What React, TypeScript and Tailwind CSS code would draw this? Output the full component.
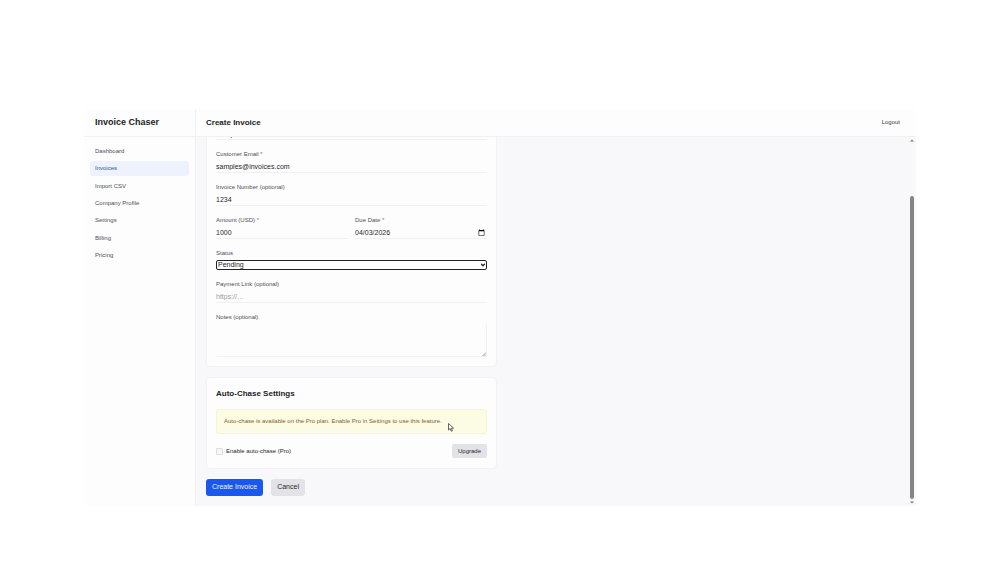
import React from 'react';
import { ChevronDown } from 'lucide-react';

const navItems = [
  'Dashboard',
  'Invoices',
  'Import CSV',
  'Company Profile',
  'Settings',
  'Billing',
  'Pricing',
];

const inputClass =
  'block w-full h-3 border-b border-[#f0f0f2] bg-transparent text-[7px] leading-[11px] text-[#26282c] placeholder:text-[#9a9ca1] outline-none';

const dateClass =
  '[&::-webkit-datetime-edit]:p-0 [&::-webkit-datetime-edit-fields-wrapper]:p-0 [&::-webkit-datetime-edit-month-field]:p-0 [&::-webkit-datetime-edit-day-field]:p-0 [&::-webkit-datetime-edit-year-field]:p-0';

interface FieldProps {
  id: string;
  label: string;
  required?: boolean;
  children: React.ReactNode;
}

const Field: React.FC<FieldProps> = ({ id, label, required, children }) => (
  <div>
    <label htmlFor={id} className="block mb-[2px] text-[6px] leading-[9px] text-[#4b4f57]">
      {label}
      {required && <span className="text-[#c25b5b]"> *</span>}
    </label>
    {children}
  </div>
);

const Sidebar: React.FC = () => (
  <aside className="w-28 shrink-0 flex flex-col border-r border-[#f1f1f4] bg-[#fdfdfd]">
    <div className="h-7 shrink-0 flex items-center px-[11px] border-b border-[#f1f1f4]">
      <span className="text-[9px] font-bold text-[#1b1e25]">Invoice Chaser</span>
    </div>
    <nav className="flex flex-col justify-between h-[119px] mt-[7px] px-[6px]">
      {navItems.map((item) => (
        <a
          key={item}
          href="#"
          className={
            item === 'Invoices'
              ? 'flex items-center h-[15px] px-[5px] rounded-[3px] text-[6px] bg-[#edf2fd] text-[#2c5796]'
              : 'flex items-center h-[15px] px-[5px] rounded-[3px] text-[6px] text-[#4b4f57]'
          }
        >
          {item}
        </a>
      ))}
    </nav>
  </aside>
);

const Scrollbar: React.FC = () => (
  <div className="w-2 shrink-0 flex flex-col items-center py-[2px]" aria-hidden="true">
    <svg viewBox="0 0 4 3" className="w-1 h-[3px]">
      <path d="M0 2.5 2 0.5 4 2.5Z" fill="#77787b" />
    </svg>
    <div className="basis-[54px] shrink-0" />
    <div className="w-1 flex-1 rounded-full bg-[#858587]" />
    <div className="h-[2px] shrink-0" />
    <svg viewBox="0 0 4 3" className="w-1 h-[3px]">
      <path d="M0 0.5 2 2.5 4 0.5Z" fill="#77787b" />
    </svg>
  </div>
);

const InvoiceDetails: React.FC = () => (
  <section className="flex flex-col gap-[10px] px-[9px] pt-[10px] pb-[9px] rounded-[4px] border border-[#f2f2f5] bg-[#fdfdfd]">
    <input
      type="text"
      aria-label="Customer Name"
      defaultValue="Sample"
      className={`${inputClass} pt-[2px]`}
    />
    <Field id="email" label="Customer Email" required>
      <input id="email" type="email" defaultValue="samples@invoices.com" className={inputClass} />
    </Field>
    <Field id="number" label="Invoice Number (optional)">
      <input id="number" type="text" defaultValue="1234" className={inputClass} />
    </Field>
    <div className="grid grid-cols-2 gap-[7px]">
      <Field id="amount" label="Amount (USD)" required>
        <input id="amount" type="text" defaultValue="1000" className={inputClass} />
      </Field>
      <Field id="due" label="Due Date" required>
        <input
          id="due"
          type="date"
          defaultValue="2026-04-03"
          className={`${inputClass} ${dateClass}`}
        />
      </Field>
    </div>
    <Field id="status" label="Status">
      <div className="relative">
        <select
          id="status"
          className="block w-full h-[10px] px-[1px] appearance-none rounded-[2px] border border-[#222] bg-[#fdfdfd] text-[7px] leading-[8px] text-[#26282c] outline-none"
        >
          <option>Pending</option>
          <option>Paid</option>
        </select>
        <ChevronDown
          className="absolute right-[1px] top-[2px] w-[6px] h-[6px] text-[#222] pointer-events-none"
          strokeWidth={5}
        />
      </div>
    </Field>
    <Field id="link" label="Payment Link (optional)">
      <input id="link" type="url" placeholder="https://…" className={inputClass} />
    </Field>
    <Field id="notes" label="Notes (optional)">
      <div className="relative">
        <textarea
          id="notes"
          className="block w-full h-[33px] resize-none rounded-[2px] border-b border-r border-[#f0f0f2] bg-transparent text-[7px] outline-none"
        />
        <svg viewBox="0 0 4 4" className="absolute right-[1px] bottom-[1px] w-1 h-1">
          <path d="M0.5 4 4 0.5M2.5 4 4 2.5" stroke="#77787b" strokeWidth="0.7" />
        </svg>
      </div>
    </Field>
  </section>
);

const AutoChase: React.FC = () => (
  <section className="px-[9px] py-[10px] rounded-[4px] border border-[#f2f2f5] bg-[#fdfdfd]">
    <h2 className="text-[8px] leading-[12px] font-bold text-[#1b1e25]">Auto-Chase Settings</h2>
    <div className="relative flex items-center h-[25px] mt-[9px] px-[7px] rounded-[3px] border border-[#f8f5cd] bg-[#fcfbe3] text-[6px] text-[#7d6430]">
      Auto-chase is available on the Pro plan. Enable Pro in Settings to use this feature.
      <svg viewBox="0 0 12 18" className="absolute left-[231px] top-[13px] w-[6px] h-[9px]">
        <path
          d="M1 1v13l3.2-3 2.3 5.5 2.3-1-2.3-5.2H11Z"
          fill="#fff"
          stroke="#333"
          strokeWidth="1.5"
        />
      </svg>
    </div>
    <div className="flex items-center justify-between mt-[10px]">
      <label htmlFor="auto" className="flex items-center gap-[3px] text-[6px] text-[#26282c]">
        <input
          id="auto"
          type="checkbox"
          disabled
          className="appearance-none w-[7px] h-[7px] rounded-[1px] border border-[#dcdcdf] bg-[#f7f7f8]"
        />
        Enable auto-chase (Pro)
      </label>
      <button
        type="button"
        className="h-[14px] px-[6px] rounded-[2px] bg-[#e3e3e7] text-[6px] text-[#26282c]"
      >
        Upgrade
      </button>
    </div>
  </section>
);

const App: React.FC = () => (
  <div
    className="h-screen flex flex-col px-[84px] pt-[109px] pb-[57px] bg-white"
    style={{ fontFamily: '"Liberation Sans", Arial, sans-serif' }}
  >
    <div className="flex flex-1 min-h-0">
      <Sidebar />
      <div className="flex flex-col flex-1 min-w-0">
        <header className="h-7 shrink-0 flex items-center justify-between pl-[10px] pr-4 border-b border-[#f1f1f4] bg-[#fdfdfd]">
          <h1 className="text-[8px] font-bold text-[#1b1e25]">Create Invoice</h1>
          <button type="button" className="text-[6px] text-[#3a3d44]">
            Logout
          </button>
        </header>
        <div className="flex flex-1 min-h-0 bg-[#f8f8fb]">
          <main className="flex flex-col justify-end flex-1 min-w-0 overflow-hidden px-[10px] pb-[10px]">
            <form className="flex flex-col gap-[10px] w-full max-w-[291px]">
              <InvoiceDetails />
              <AutoChase />
              <div className="flex gap-2">
                <button
                  type="button"
                  className="h-[17px] px-[6px] rounded-[3px] bg-[#1a57ee] text-[7px] text-[#eef3ff]"
                >
                  Create Invoice
                </button>
                <button
                  type="button"
                  className="h-[17px] px-[6px] rounded-[3px] bg-[#e3e3e7] text-[7px] text-[#26282c]"
                >
                  Cancel
                </button>
              </div>
            </form>
          </main>
          <Scrollbar />
        </div>
      </div>
    </div>
  </div>
);

export default App;
